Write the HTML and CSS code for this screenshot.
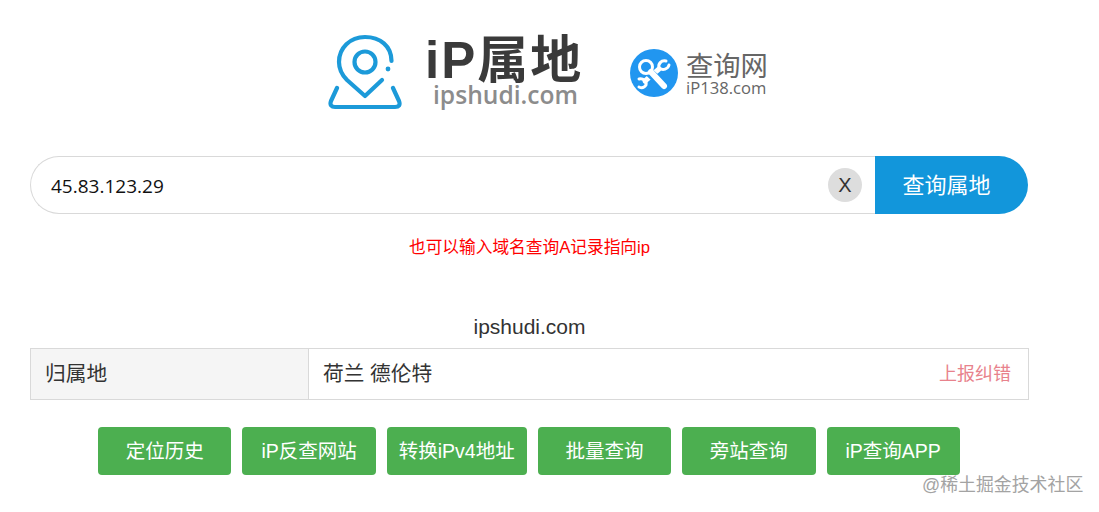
FILE: index.html
```html
<!DOCTYPE html>
<html>
<head>
    <title>iP属地查询</title>
    <link rel="stylesheet" href="styles.css">
</head>
<body>
    <div class="logos">
        <div class="logo-main">
            <svg class="pin" width="76" height="78" viewBox="0 0 76 78" fill="none" stroke="#1c9ad9" stroke-linecap="round" stroke-linejoin="round">
                <path d="M63.5 27 C63.5 12 52 3 37 3 C22 3 11 14 11 28 C11 36 15 42 19 46 L37 62 L54 46" stroke-width="4.2"/>
                <circle cx="37" cy="28" r="10.5" stroke-width="4.2"/>
                <circle cx="60" cy="35" r="2.4" fill="#1c9ad9" stroke="none"/>
                <path d="M9 54 L3 67 C1.5 71 3.5 73 7 73 L67 73 C71 73 72.5 71 71 67 L65 54" stroke-width="4.2"/>
            </svg>
            <div class="logo-words">
                <div class="logo-title">iP属地</div>
                <div class="logo-site">ipshudi.com</div>
            </div>
        </div>
        <div class="logo-second">
            <svg class="tools" width="48" height="48" viewBox="0 0 48 48">
                <circle cx="24" cy="24" r="24" fill="#2196f0"/>
                <g fill="none" stroke="#fff" stroke-linecap="round">
                    <path d="M29 20 L15 32" stroke-width="5"/>
                    <path d="M36 12 C31 11 28 15 29 19 C33 22 38 20 39 16" stroke-width="3"/>
                    <path d="M9 30 C13 29 17 32 16 36 C14 39 11 39 9 38" stroke-width="3"/>
                    <path d="M20 24 L34 37" stroke="#2196f0" stroke-width="9"/>
                    <circle cx="16" cy="18" r="6.5" stroke-width="3"/>
                    <path d="M21 23 L34 37" stroke-width="6"/>
                </g>
            </svg>
            <div class="second-words">
                <div class="second-title">查询网</div>
                <div class="second-site">iP138.com</div>
            </div>
        </div>
    </div>

    <div class="search">
        <div class="search-input">
            <span class="search-value">45.83.123.29</span>
            <span class="clear">X</span>
        </div>
        <div class="search-btn">查询属地</div>
    </div>

    <p class="tip">也可以输入域名查询A记录指向ip</p>

    <p class="site-name">ipshudi.com</p>

    <div class="result">
        <div class="result-label">归属地</div>
        <div class="result-value">
            <span>荷兰 德伦特</span>
            <a class="report" href="#">上报纠错</a>
        </div>
    </div>

    <div class="actions">
        <a class="action" href="#">定位历史</a>
        <a class="action" href="#">iP反查网站</a>
        <a class="action" href="#">转换iPv4地址</a>
        <a class="action" href="#">批量查询</a>
        <a class="action" href="#">旁站查询</a>
        <a class="action" href="#">iP查询APP</a>
    </div>

    <div class="watermark">@稀土掘金技术社区</div>
</body>
</html>
```

FILE: styles.css
```css
html, body { margin: 0; padding: 0; height: 512px; overflow: hidden; background: #fff; }
body { position: relative; width: 1099px; font-family: "Liberation Sans", "Noto Sans CJK SC", sans-serif; color: #333; }
a { text-decoration: none; }

.logos { display: flex; height: 156px; padding-left: 328px; box-sizing: border-box; }
.logo-main { display: flex; padding-top: 34px; }
.pin { display: block; }
.logo-words { margin-left: 21px; width: 157px; }
.logo-title { font-size: 51px; line-height: 50px; font-weight: 700; letter-spacing: 2px; color: #3a3a3a; margin-top: 2px; white-space: nowrap; }
.logo-site { font-size: 24.6px; line-height: 24px; font-weight: 600; color: #8c8c8c; font-family: "Open Sans", sans-serif; margin: -3px 0 0 8px; white-space: nowrap; }
.logo-second { display: flex; margin-left: 48px; padding-top: 49px; }
.tools { display: block; }
.second-words { margin-left: 8px; }
.second-title { font-size: 27.3px; line-height: 32px; color: #666; margin-top: 2px; white-space: nowrap; }
.second-site { font-size: 16.6px; line-height: 16px; color: #666; font-family: "Open Sans", sans-serif; font-weight: 500; margin-top: -3px; }

.search { display: flex; width: 998px; height: 58px; margin-left: 30px; }
.search-input { flex: 1; display: flex; align-items: center; justify-content: space-between; box-sizing: border-box; border: 1px solid #d9d9d9; border-right: 0; border-radius: 29px 0 0 29px; padding: 0 13px 0 20px; }
.search-value { font-size: 19px; color: #111; font-family: "Open Sans", sans-serif; padding-top: 1px; }
.clear { width: 34px; height: 34px; border-radius: 50%; background: #ddd; font-size: 20px; line-height: 34px; text-align: center; color: #333; }
.search-btn { width: 153px; box-sizing: border-box; padding: 1px 10px 0 0; background: #1296db; color: #fff; font-size: 22px; line-height: 58px; text-align: center; border-radius: 0 29px 29px 0; }

.tip { margin: 23px 0 0; width: 1059px; font-size: 16.7px; line-height: 22px; color: #f00; text-align: center; }
.site-name { margin: 56px 0 0; font-size: 21px; line-height: 24px; color: #333; text-align: center; width: 1059px; }

.result { display: flex; width: 999px; height: 52px; margin: 9px 0 0 30px; box-sizing: border-box; border: 1px solid #d9d9d9; font-size: 20.7px; line-height: 50px; }
.result-label { width: 278px; box-sizing: border-box; padding-left: 14px; background: #f5f5f5; border-right: 1px solid #d9d9d9; }
.result-value { flex: 1; display: flex; justify-content: space-between; padding: 0 17px 0 14px; }
.report { color: #e8828c; font-size: 18px; }

.actions { display: flex; gap: 11px; margin: 27px 0 0 98px; }
.action { display: block; min-width: 133.4px; box-sizing: border-box; height: 48px; line-height: 48px; padding: 0 12px; border-radius: 4px; background: #4caf50; color: #fff; font-size: 19.5px; text-align: center; white-space: nowrap; }

.watermark { position: absolute; left: 922px; top: 474px; font-size: 17.9px; line-height: 22px; color: #a3a3a3; white-space: nowrap; }
```
